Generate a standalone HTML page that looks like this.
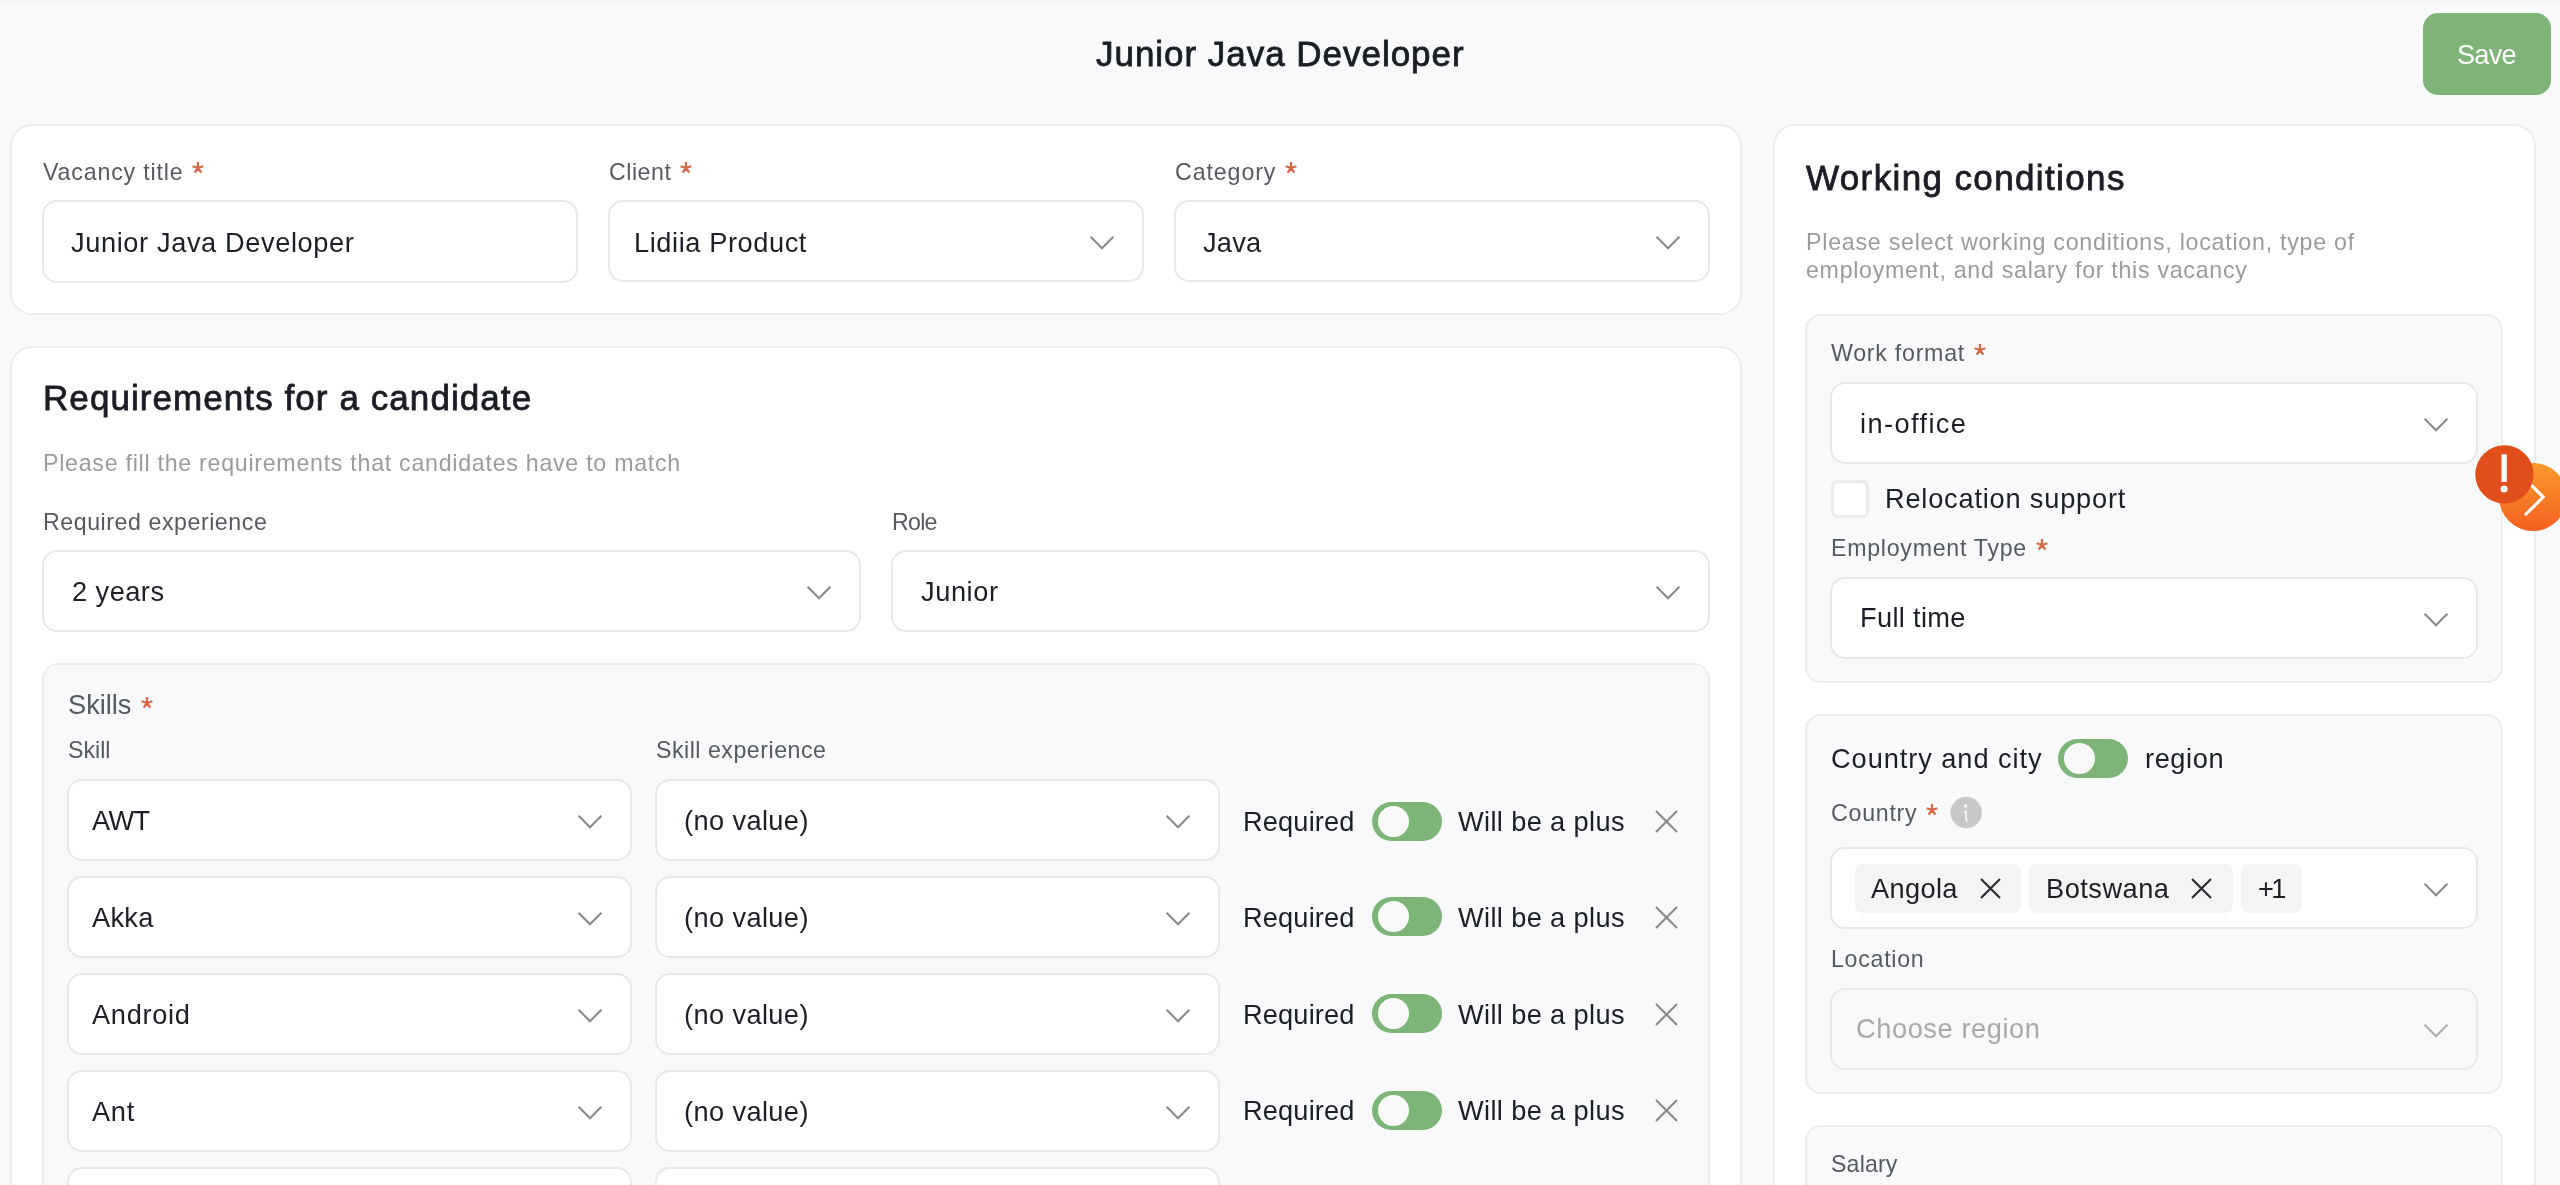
<!DOCTYPE html>
<html lang="en"><head><meta charset="utf-8"><title>Junior Java Developer</title>
<style>
html,body{margin:0;padding:0;overflow:hidden}
html{width:2560px;height:1185px;background:#f8f9fb}
#clip{position:absolute;left:0;top:0;width:2560px;height:1185px;overflow:hidden}
body{width:2560px;height:1185px;overflow:hidden;position:relative;background:#f8f9fb;
font-family:"Liberation Sans",sans-serif;}
.b{position:absolute;box-sizing:content-box;display:block}
.t{position:absolute;white-space:pre;font-family:"Liberation Sans",sans-serif;will-change:transform}
#w{position:absolute;left:0;top:0;width:2560px;height:1300px;filter:blur(0.6px)}
</style></head><body><div id="clip"><div id="w">
<div class="b" style="left:0;top:0;width:2560px;height:9px;background:linear-gradient(#f3f4f6,#f8f9fb)"></div>
<div class="t" style="left:1095.90px;top:35.77px;font-size:35.0px;line-height:35.0px;color:#1a1d23;letter-spacing:0.967px;-webkit-text-stroke:0.8px #1a1d23;">Junior Java Developer</div>
<div class="b" style="left:2423px;top:13px;width:128px;height:82px;border-radius:15px;background:#7eb478;"></div>
<div class="t" style="left:2456.50px;top:40.98px;font-size:27.2px;line-height:27.2px;color:#ffffff;letter-spacing:-0.763px;">Save</div>
<div class="b" style="left:10px;top:124px;width:1728px;height:187px;border-radius:22px;background:#fff;border:2px solid #ececee;"></div>
<div class="t" style="left:42.80px;top:160.56px;font-size:23.2px;line-height:23.2px;color:#565a60;letter-spacing:0.825px;">Vacancy title</div>
<svg class="b" style="left:190.20px;top:160.40px" width="16" height="16" viewBox="-8 -8 16 16"><path d="M0 0L0.00 -5.90M0 0L5.42 -1.76M0 0L-5.42 -1.76M0 0L3.35 4.61M0 0L-3.35 4.61" stroke="#d4694a" stroke-width="2.3" fill="none"/></svg>
<div class="t" style="left:608.50px;top:160.56px;font-size:23.2px;line-height:23.2px;color:#565a60;letter-spacing:0.516px;">Client</div>
<svg class="b" style="left:678.10px;top:160.40px" width="16" height="16" viewBox="-8 -8 16 16"><path d="M0 0L0.00 -5.90M0 0L5.42 -1.76M0 0L-5.42 -1.76M0 0L3.35 4.61M0 0L-3.35 4.61" stroke="#d4694a" stroke-width="2.3" fill="none"/></svg>
<div class="t" style="left:1175.00px;top:160.56px;font-size:23.2px;line-height:23.2px;color:#565a60;letter-spacing:0.908px;">Category</div>
<svg class="b" style="left:1283.20px;top:160.40px" width="16" height="16" viewBox="-8 -8 16 16"><path d="M0 0L0.00 -5.90M0 0L5.42 -1.76M0 0L-5.42 -1.76M0 0L3.35 4.61M0 0L-3.35 4.61" stroke="#d4694a" stroke-width="2.3" fill="none"/></svg>
<div class="b" style="left:42px;top:200px;width:532px;height:79px;border-radius:15px;background:#fff;border:2px solid #e8e8ea;"></div>
<div class="t" style="left:71.00px;top:228.78px;font-size:27.2px;line-height:27.2px;color:#1c1f25;letter-spacing:0.618px;">Junior Java Developer</div>
<div class="b" style="left:608px;top:200px;width:532px;height:78px;border-radius:15px;background:#fff;border:2px solid #e8e8ea;"></div>
<div class="t" style="left:633.90px;top:228.78px;font-size:27.2px;line-height:27.2px;color:#1c1f25;letter-spacing:0.592px;">Lidiia Product</div>
<svg class="b" style="left:1087.5px;top:233.5px" width="28" height="18" viewBox="0 0 28 18"><path d="M2.6 2.8L14 14.2L25.4 2.8" fill="none" stroke="#8a8a8a" stroke-width="2.1" stroke-linecap="butt" stroke-linejoin="miter"/></svg>
<div class="b" style="left:1174px;top:200px;width:532px;height:78px;border-radius:15px;background:#fff;border:2px solid #e8e8ea;"></div>
<div class="t" style="left:1203.00px;top:228.78px;font-size:27.2px;line-height:27.2px;color:#1c1f25;letter-spacing:0.209px;">Java</div>
<svg class="b" style="left:1653.5px;top:233.5px" width="28" height="18" viewBox="0 0 28 18"><path d="M2.6 2.8L14 14.2L25.4 2.8" fill="none" stroke="#8a8a8a" stroke-width="2.1" stroke-linecap="butt" stroke-linejoin="miter"/></svg>
<div class="b" style="left:10px;top:346px;width:1728px;height:900px;border-radius:22px;background:#fff;border:2px solid #ececee;"></div>
<div class="t" style="left:42.90px;top:379.77px;font-size:35.0px;line-height:35.0px;color:#1a1d23;letter-spacing:1.072px;-webkit-text-stroke:0.8px #1a1d23;">Requirements for a candidate</div>
<div class="t" style="left:42.50px;top:451.56px;font-size:23.2px;line-height:23.2px;color:#9b9b9b;letter-spacing:0.732px;">Please fill the requirements that candidates have to match</div>
<div class="t" style="left:42.90px;top:510.66px;font-size:23.2px;line-height:23.2px;color:#565a60;letter-spacing:0.545px;">Required experience</div>
<div class="t" style="left:892.00px;top:510.66px;font-size:23.2px;line-height:23.2px;color:#565a60;letter-spacing:-0.741px;">Role</div>
<div class="b" style="left:42px;top:550px;width:815px;height:78px;border-radius:15px;background:#fff;border:2px solid #e8e8ea;"></div>
<div class="t" style="left:71.50px;top:578.18px;font-size:27.2px;line-height:27.2px;color:#1c1f25;letter-spacing:0.469px;">2 years</div>
<svg class="b" style="left:804.5px;top:583.5px" width="28" height="18" viewBox="0 0 28 18"><path d="M2.6 2.8L14 14.2L25.4 2.8" fill="none" stroke="#8a8a8a" stroke-width="2.1" stroke-linecap="butt" stroke-linejoin="miter"/></svg>
<div class="b" style="left:891px;top:550px;width:815px;height:78px;border-radius:15px;background:#fff;border:2px solid #e8e8ea;"></div>
<div class="t" style="left:920.50px;top:578.18px;font-size:27.2px;line-height:27.2px;color:#1c1f25;letter-spacing:0.581px;">Junior</div>
<svg class="b" style="left:1653.5px;top:583.5px" width="28" height="18" viewBox="0 0 28 18"><path d="M2.6 2.8L14 14.2L25.4 2.8" fill="none" stroke="#8a8a8a" stroke-width="2.1" stroke-linecap="butt" stroke-linejoin="miter"/></svg>
<div class="b" style="left:42px;top:663px;width:1664px;height:600px;border-radius:16px;background:#f8f9fb;border:2px solid #ececee;"></div>
<div class="t" style="left:67.50px;top:691.48px;font-size:27.2px;line-height:27.2px;color:#565a60;letter-spacing:0.003px;">Skills</div>
<svg class="b" style="left:138.70px;top:694.70px" width="16" height="16" viewBox="-8 -8 16 16"><path d="M0 0L0.00 -5.90M0 0L5.42 -1.76M0 0L-5.42 -1.76M0 0L3.35 4.61M0 0L-3.35 4.61" stroke="#d4694a" stroke-width="2.3" fill="none"/></svg>
<div class="t" style="left:67.50px;top:739.16px;font-size:23.2px;line-height:23.2px;color:#565a60;letter-spacing:-0.012px;">Skill</div>
<div class="t" style="left:655.50px;top:739.16px;font-size:23.2px;line-height:23.2px;color:#565a60;letter-spacing:0.502px;">Skill experience</div>
<div class="b" style="left:67px;top:779px;width:561px;height:78px;border-radius:15px;background:#fff;border:2px solid #e8e8ea;"></div>
<div class="t" style="left:92.00px;top:806.58px;font-size:27.2px;line-height:27.2px;color:#1c1f25;letter-spacing:-0.616px;">AWT</div>
<svg class="b" style="left:575.5px;top:812.5px" width="28" height="18" viewBox="0 0 28 18"><path d="M2.6 2.8L14 14.2L25.4 2.8" fill="none" stroke="#8a8a8a" stroke-width="2.1" stroke-linecap="butt" stroke-linejoin="miter"/></svg>
<div class="b" style="left:655px;top:779px;width:561px;height:78px;border-radius:15px;background:#fff;border:2px solid #e8e8ea;"></div>
<div class="t" style="left:684.00px;top:806.58px;font-size:27.2px;line-height:27.2px;color:#1c1f25;letter-spacing:0.394px;">(no value)</div>
<svg class="b" style="left:1163.5px;top:812.5px" width="28" height="18" viewBox="0 0 28 18"><path d="M2.6 2.8L14 14.2L25.4 2.8" fill="none" stroke="#8a8a8a" stroke-width="2.1" stroke-linecap="butt" stroke-linejoin="miter"/></svg>
<div class="t" style="left:1243.00px;top:807.88px;font-size:27.2px;line-height:27.2px;color:#1c1f25;letter-spacing:0.160px;">Required</div>
<div class="b" style="left:1372px;top:802px;width:70px;height:39px;border-radius:19.5px;background:#7db478;"></div>
<div class="b" style="left:1378px;top:806px;width:31px;height:31px;border-radius:15.5px;background:#f9f9f9;"></div>
<div class="t" style="left:1457.90px;top:807.88px;font-size:27.2px;line-height:27.2px;color:#1c1f25;letter-spacing:0.372px;">Will be a plus</div>
<svg class="b" style="left:1654.3px;top:809.4px" width="25.0" height="25.0" viewBox="-12.5 -12.5 25.0 25.0"><path d="M-10.5 -10.5L10.5 10.5M10.5 -10.5L-10.5 10.5" stroke="#8a8a8a" stroke-width="2.1" fill="none"/></svg>
<div class="b" style="left:67px;top:876px;width:561px;height:78px;border-radius:15px;background:#fff;border:2px solid #e8e8ea;"></div>
<div class="t" style="left:92.20px;top:903.98px;font-size:27.2px;line-height:27.2px;color:#1c1f25;letter-spacing:0.269px;">Akka</div>
<svg class="b" style="left:575.5px;top:909.5px" width="28" height="18" viewBox="0 0 28 18"><path d="M2.6 2.8L14 14.2L25.4 2.8" fill="none" stroke="#8a8a8a" stroke-width="2.1" stroke-linecap="butt" stroke-linejoin="miter"/></svg>
<div class="b" style="left:655px;top:876px;width:561px;height:78px;border-radius:15px;background:#fff;border:2px solid #e8e8ea;"></div>
<div class="t" style="left:684.00px;top:903.98px;font-size:27.2px;line-height:27.2px;color:#1c1f25;letter-spacing:0.394px;">(no value)</div>
<svg class="b" style="left:1163.5px;top:909.5px" width="28" height="18" viewBox="0 0 28 18"><path d="M2.6 2.8L14 14.2L25.4 2.8" fill="none" stroke="#8a8a8a" stroke-width="2.1" stroke-linecap="butt" stroke-linejoin="miter"/></svg>
<div class="t" style="left:1243.00px;top:903.58px;font-size:27.2px;line-height:27.2px;color:#1c1f25;letter-spacing:0.160px;">Required</div>
<div class="b" style="left:1372px;top:897px;width:70px;height:39px;border-radius:19.5px;background:#7db478;"></div>
<div class="b" style="left:1378px;top:901px;width:31px;height:31px;border-radius:15.5px;background:#f9f9f9;"></div>
<div class="t" style="left:1457.90px;top:903.58px;font-size:27.2px;line-height:27.2px;color:#1c1f25;letter-spacing:0.372px;">Will be a plus</div>
<svg class="b" style="left:1654.3px;top:904.7px" width="25.0" height="25.0" viewBox="-12.5 -12.5 25.0 25.0"><path d="M-10.5 -10.5L10.5 10.5M10.5 -10.5L-10.5 10.5" stroke="#8a8a8a" stroke-width="2.1" fill="none"/></svg>
<div class="b" style="left:67px;top:973px;width:561px;height:78px;border-radius:15px;background:#fff;border:2px solid #e8e8ea;"></div>
<div class="t" style="left:92.20px;top:1000.68px;font-size:27.2px;line-height:27.2px;color:#1c1f25;letter-spacing:0.707px;">Android</div>
<svg class="b" style="left:575.5px;top:1006.5px" width="28" height="18" viewBox="0 0 28 18"><path d="M2.6 2.8L14 14.2L25.4 2.8" fill="none" stroke="#8a8a8a" stroke-width="2.1" stroke-linecap="butt" stroke-linejoin="miter"/></svg>
<div class="b" style="left:655px;top:973px;width:561px;height:78px;border-radius:15px;background:#fff;border:2px solid #e8e8ea;"></div>
<div class="t" style="left:684.00px;top:1000.68px;font-size:27.2px;line-height:27.2px;color:#1c1f25;letter-spacing:0.394px;">(no value)</div>
<svg class="b" style="left:1163.5px;top:1006.5px" width="28" height="18" viewBox="0 0 28 18"><path d="M2.6 2.8L14 14.2L25.4 2.8" fill="none" stroke="#8a8a8a" stroke-width="2.1" stroke-linecap="butt" stroke-linejoin="miter"/></svg>
<div class="t" style="left:1243.00px;top:1000.78px;font-size:27.2px;line-height:27.2px;color:#1c1f25;letter-spacing:0.160px;">Required</div>
<div class="b" style="left:1372px;top:994px;width:70px;height:39px;border-radius:19.5px;background:#7db478;"></div>
<div class="b" style="left:1378px;top:998px;width:31px;height:31px;border-radius:15.5px;background:#f9f9f9;"></div>
<div class="t" style="left:1457.90px;top:1000.78px;font-size:27.2px;line-height:27.2px;color:#1c1f25;letter-spacing:0.372px;">Will be a plus</div>
<svg class="b" style="left:1654.3px;top:1001.6px" width="25.0" height="25.0" viewBox="-12.5 -12.5 25.0 25.0"><path d="M-10.5 -10.5L10.5 10.5M10.5 -10.5L-10.5 10.5" stroke="#8a8a8a" stroke-width="2.1" fill="none"/></svg>
<div class="b" style="left:67px;top:1070px;width:561px;height:78px;border-radius:15px;background:#fff;border:2px solid #e8e8ea;"></div>
<div class="t" style="left:92.20px;top:1097.68px;font-size:27.2px;line-height:27.2px;color:#1c1f25;letter-spacing:0.736px;">Ant</div>
<svg class="b" style="left:575.5px;top:1103.5px" width="28" height="18" viewBox="0 0 28 18"><path d="M2.6 2.8L14 14.2L25.4 2.8" fill="none" stroke="#8a8a8a" stroke-width="2.1" stroke-linecap="butt" stroke-linejoin="miter"/></svg>
<div class="b" style="left:655px;top:1070px;width:561px;height:78px;border-radius:15px;background:#fff;border:2px solid #e8e8ea;"></div>
<div class="t" style="left:684.00px;top:1097.68px;font-size:27.2px;line-height:27.2px;color:#1c1f25;letter-spacing:0.394px;">(no value)</div>
<svg class="b" style="left:1163.5px;top:1103.5px" width="28" height="18" viewBox="0 0 28 18"><path d="M2.6 2.8L14 14.2L25.4 2.8" fill="none" stroke="#8a8a8a" stroke-width="2.1" stroke-linecap="butt" stroke-linejoin="miter"/></svg>
<div class="t" style="left:1243.00px;top:1097.38px;font-size:27.2px;line-height:27.2px;color:#1c1f25;letter-spacing:0.160px;">Required</div>
<div class="b" style="left:1372px;top:1091px;width:70px;height:39px;border-radius:19.5px;background:#7db478;"></div>
<div class="b" style="left:1378px;top:1095px;width:31px;height:31px;border-radius:15.5px;background:#f9f9f9;"></div>
<div class="t" style="left:1457.90px;top:1097.38px;font-size:27.2px;line-height:27.2px;color:#1c1f25;letter-spacing:0.372px;">Will be a plus</div>
<svg class="b" style="left:1654.3px;top:1098.4px" width="25.0" height="25.0" viewBox="-12.5 -12.5 25.0 25.0"><path d="M-10.5 -10.5L10.5 10.5M10.5 -10.5L-10.5 10.5" stroke="#8a8a8a" stroke-width="2.1" fill="none"/></svg>
<div class="b" style="left:67px;top:1167px;width:561px;height:78px;border-radius:15px;background:#fff;border:2px solid #e8e8ea;"></div>
<svg class="b" style="left:575.5px;top:1200.5px" width="28" height="18" viewBox="0 0 28 18"><path d="M2.6 2.8L14 14.2L25.4 2.8" fill="none" stroke="#8a8a8a" stroke-width="2.1" stroke-linecap="butt" stroke-linejoin="miter"/></svg>
<div class="b" style="left:655px;top:1167px;width:561px;height:78px;border-radius:15px;background:#fff;border:2px solid #e8e8ea;"></div>
<svg class="b" style="left:1163.5px;top:1200.5px" width="28" height="18" viewBox="0 0 28 18"><path d="M2.6 2.8L14 14.2L25.4 2.8" fill="none" stroke="#8a8a8a" stroke-width="2.1" stroke-linecap="butt" stroke-linejoin="miter"/></svg>
<div class="b" style="left:1773px;top:124px;width:759px;height:1200px;border-radius:22px;background:#fff;border:2px solid #ececee;"></div>
<div class="t" style="left:1806.10px;top:160.37px;font-size:35.0px;line-height:35.0px;color:#1a1d23;letter-spacing:1.374px;-webkit-text-stroke:0.8px #1a1d23;">Working conditions</div>
<div class="t" style="left:1806.00px;top:231.16px;font-size:23.2px;line-height:23.2px;color:#9b9b9b;letter-spacing:0.756px;">Please select working conditions, location, type of</div>
<div class="t" style="left:1806.00px;top:259.26px;font-size:23.2px;line-height:23.2px;color:#9b9b9b;letter-spacing:0.713px;">employment, and salary for this vacancy</div>
<div class="b" style="left:1805px;top:314px;width:694px;height:365px;border-radius:16px;background:#f8f9fb;border:2px solid #ececee;"></div>
<div class="t" style="left:1830.50px;top:342.36px;font-size:23.2px;line-height:23.2px;color:#565a60;letter-spacing:0.739px;">Work format</div>
<svg class="b" style="left:1971.50px;top:342.20px" width="16" height="16" viewBox="-8 -8 16 16"><path d="M0 0L0.00 -5.90M0 0L5.42 -1.76M0 0L-5.42 -1.76M0 0L3.35 4.61M0 0L-3.35 4.61" stroke="#d4694a" stroke-width="2.3" fill="none"/></svg>
<div class="b" style="left:1830px;top:382px;width:644px;height:78px;border-radius:15px;background:#fff;border:2px solid #e8e8ea;"></div>
<div class="t" style="left:1859.50px;top:410.18px;font-size:27.2px;line-height:27.2px;color:#1c1f25;letter-spacing:1.408px;">in-office</div>
<svg class="b" style="left:2421.5px;top:415.5px" width="28" height="18" viewBox="0 0 28 18"><path d="M2.6 2.8L14 14.2L25.4 2.8" fill="none" stroke="#8a8a8a" stroke-width="2.1" stroke-linecap="butt" stroke-linejoin="miter"/></svg>
<div class="b" style="left:1831px;top:479.5px;width:32px;height:32px;border-radius:7px;background:#fff;border:3px solid #ebebeb;"></div>
<div class="t" style="left:1885.10px;top:485.48px;font-size:27.2px;line-height:27.2px;color:#1c1f25;letter-spacing:0.800px;">Relocation support</div>
<div class="t" style="left:1831.00px;top:536.76px;font-size:23.2px;line-height:23.2px;color:#565a60;letter-spacing:0.718px;">Employment Type</div>
<svg class="b" style="left:2034.00px;top:536.60px" width="16" height="16" viewBox="-8 -8 16 16"><path d="M0 0L0.00 -5.90M0 0L5.42 -1.76M0 0L-5.42 -1.76M0 0L3.35 4.61M0 0L-3.35 4.61" stroke="#d4694a" stroke-width="2.3" fill="none"/></svg>
<div class="b" style="left:1830px;top:577px;width:644px;height:78px;border-radius:15px;background:#fff;border:2px solid #e8e8ea;"></div>
<div class="t" style="left:1859.80px;top:604.38px;font-size:27.2px;line-height:27.2px;color:#1c1f25;letter-spacing:0.342px;">Full time</div>
<svg class="b" style="left:2421.5px;top:610.5px" width="28" height="18" viewBox="0 0 28 18"><path d="M2.6 2.8L14 14.2L25.4 2.8" fill="none" stroke="#8a8a8a" stroke-width="2.1" stroke-linecap="butt" stroke-linejoin="miter"/></svg>
<div class="b" style="left:1805px;top:714px;width:694px;height:376px;border-radius:16px;background:#f8f9fb;border:2px solid #ececee;"></div>
<div class="t" style="left:1831.00px;top:745.48px;font-size:27.2px;line-height:27.2px;color:#1c1f25;letter-spacing:0.944px;">Country and city</div>
<div class="b" style="left:2058px;top:739px;width:70px;height:39px;border-radius:19.5px;background:#7db478;"></div>
<div class="b" style="left:2064px;top:743px;width:31px;height:31px;border-radius:15.5px;background:#f9f9f9;"></div>
<div class="t" style="left:2144.50px;top:745.48px;font-size:27.2px;line-height:27.2px;color:#1c1f25;letter-spacing:0.597px;">region</div>
<div class="t" style="left:1831.00px;top:801.96px;font-size:23.2px;line-height:23.2px;color:#565a60;letter-spacing:0.746px;">Country</div>
<svg class="b" style="left:1924.40px;top:801.80px" width="16" height="16" viewBox="-8 -8 16 16"><path d="M0 0L0.00 -5.90M0 0L5.42 -1.76M0 0L-5.42 -1.76M0 0L3.35 4.61M0 0L-3.35 4.61" stroke="#d4694a" stroke-width="2.3" fill="none"/></svg>
<svg class="b" style="left:1948px;top:795px" width="36" height="36" viewBox="1948 795 36 36"><circle cx="1966.2" cy="812.5" r="15.7" fill="#c8c8c8"/><circle cx="1965.5" cy="805.9" r="1.8" fill="#f6f6f6"/><path d="M1964 811.7H1966.1V819.4Q1966.1 820.7 1968 820.7" stroke="#f6f6f6" stroke-width="1.8" fill="none"/></svg>
<div class="b" style="left:1830px;top:847px;width:644px;height:78px;border-radius:15px;background:#fff;border:2px solid #e8e8ea;"></div>
<svg class="b" style="left:2421.5px;top:880.5px" width="28" height="18" viewBox="0 0 28 18"><path d="M2.6 2.8L14 14.2L25.4 2.8" fill="none" stroke="#8a8a8a" stroke-width="2.1" stroke-linecap="butt" stroke-linejoin="miter"/></svg>
<div class="b" style="left:1855px;top:864px;width:166px;height:48.5px;border-radius:8px;background:#f4f4f5;"></div>
<div class="t" style="left:1871.00px;top:874.78px;font-size:27.2px;line-height:27.2px;color:#1c1f25;letter-spacing:0.354px;">Angola</div>
<svg class="b" style="left:1978.5px;top:876.5px" width="23.0" height="23.0" viewBox="-11.5 -11.5 23.0 23.0"><path d="M-9.5 -9.5L9.5 9.5M9.5 -9.5L-9.5 9.5" stroke="#2a2d33" stroke-width="2.2" fill="none"/></svg>
<div class="b" style="left:2029px;top:864px;width:204px;height:48.5px;border-radius:8px;background:#f4f4f5;"></div>
<div class="t" style="left:2045.50px;top:874.78px;font-size:27.2px;line-height:27.2px;color:#1c1f25;letter-spacing:0.505px;">Botswana</div>
<svg class="b" style="left:2190.0px;top:876.5px" width="23.0" height="23.0" viewBox="-11.5 -11.5 23.0 23.0"><path d="M-9.5 -9.5L9.5 9.5M9.5 -9.5L-9.5 9.5" stroke="#2a2d33" stroke-width="2.2" fill="none"/></svg>
<div class="b" style="left:2241px;top:864px;width:61px;height:48.5px;border-radius:8px;background:#f4f4f5;"></div>
<div class="t" style="left:2257.50px;top:874.78px;font-size:27.2px;line-height:27.2px;color:#1c1f25;letter-spacing:-2.508px;">+1</div>
<div class="t" style="left:1831.00px;top:947.86px;font-size:23.2px;line-height:23.2px;color:#565a60;letter-spacing:0.726px;">Location</div>
<div class="b" style="left:1830px;top:988px;width:644px;height:78px;border-radius:15px;background:#f8f9fb;border:2px solid #e8e8ea;"></div>
<div class="t" style="left:1855.80px;top:1015.38px;font-size:27.2px;line-height:27.2px;color:#a9a9a9;letter-spacing:0.591px;">Choose region</div>
<svg class="b" style="left:2421.5px;top:1021.5px" width="28" height="18" viewBox="0 0 28 18"><path d="M2.6 2.8L14 14.2L25.4 2.8" fill="none" stroke="#adadad" stroke-width="2.1" stroke-linecap="butt" stroke-linejoin="miter"/></svg>
<div class="b" style="left:1805px;top:1125px;width:694px;height:200px;border-radius:16px;background:#f8f9fb;border:2px solid #ececee;"></div>
<div class="t" style="left:1831.00px;top:1153.16px;font-size:23.2px;line-height:23.2px;color:#565a60;letter-spacing:0.146px;">Salary</div>
<div class="b" style="left:2499px;top:462.5px;width:68px;height:68px;border-radius:34px;background:linear-gradient(180deg,#fb9a2a,#f45f20)"></div>
<svg class="b" style="left:2514px;top:474px" width="46" height="50" viewBox="0 0 46 50"><path d="M11 4.8L29.2 23L11 41.2" stroke="#fff" stroke-width="3.1" fill="none"/></svg>
<svg class="b" style="left:2475px;top:445px" width="60" height="60" viewBox="0 0 60 60"><circle cx="29.4" cy="29.3" r="29.1" fill="#e04e1b"/><rect x="26.5" y="9.3" width="5.3" height="27.6" fill="#fff"/><circle cx="29.1" cy="44" r="3.5" fill="#fff"/></svg>
</div></div></body></html>
